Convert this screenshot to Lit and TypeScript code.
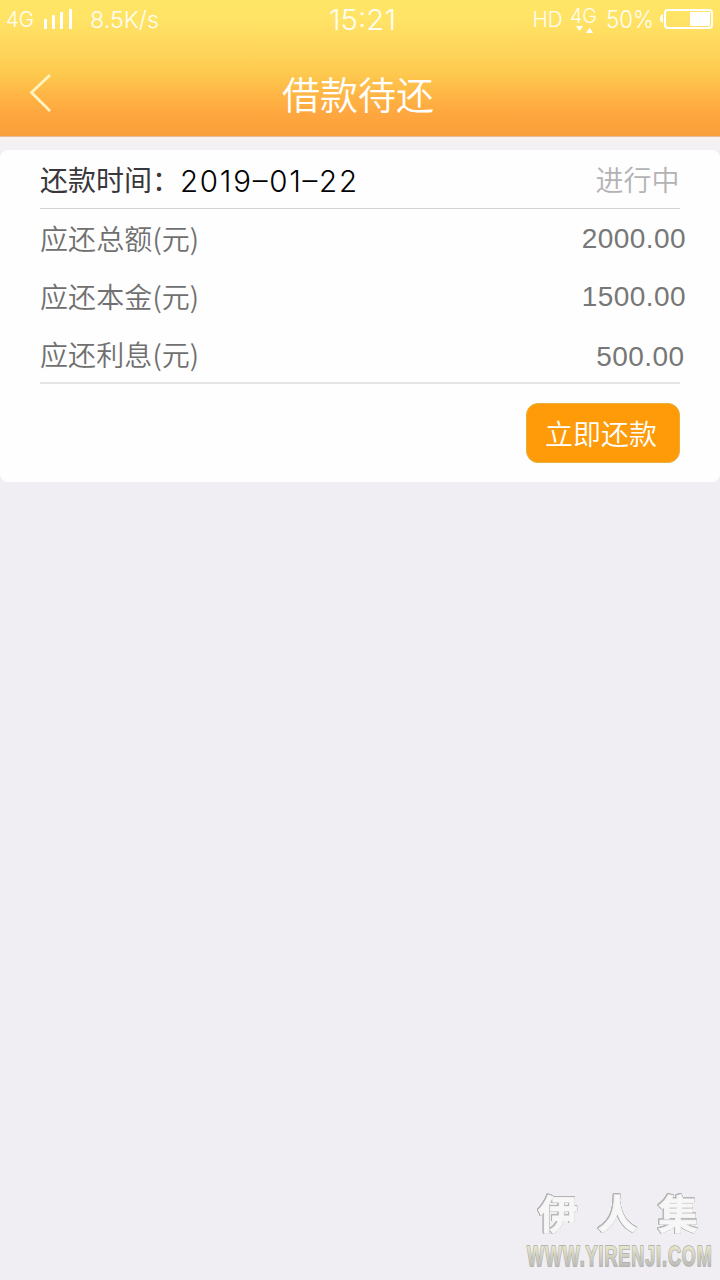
import { LitElement, html, css } from "lit";
import { customElement, property } from "lit/decorators.js";

@customElement("status-bar")
class StatusBar extends LitElement {
  static styles = css`
    :host { display: block; height: 40px; color: #fffef6; font-family: Inter, "Liberation Sans", sans-serif; font-weight: 360; }
    svg { display: block; width: 720px; height: 40px; }
  `;
  render() {
    return html`<svg viewBox="0 0 720 40" fill="currentColor">
      <text x="6" y="26.5" font-size="21.5" textLength="28" lengthAdjust="spacingAndGlyphs">4G</text>
      <g fill="#fff">
        <rect x="44" y="19" width="3" height="10" /><rect x="52" y="15" width="3" height="14" />
        <rect x="60" y="12" width="3" height="17" /><rect x="69" y="9" width="3" height="20" />
      </g>
      <text x="90" y="28" font-size="23" textLength="69" lengthAdjust="spacingAndGlyphs">8.5K/s</text>
      <text x="329" y="30" font-size="28" font-weight="300" textLength="67" lengthAdjust="spacingAndGlyphs">15:21</text>
      <text x="532.5" y="26.5" font-size="21" textLength="30" lengthAdjust="spacingAndGlyphs">HD</text>
      <text x="570" y="22.5" font-size="19.5" textLength="27" lengthAdjust="spacingAndGlyphs">4G</text>
      <path d="M576 26h7l-3.500 5zM586 33h7l-3.500-5.500z" fill="#fff" />
      <text x="606" y="28" font-size="23.500" textLength="48" lengthAdjust="spacingAndGlyphs">50%</text>
      <rect x="665" y="10" width="47" height="18" rx="3" fill="none" stroke="#fff" stroke-width="2" />
      <rect x="690" y="12" width="20" height="14" fill="#fff" />
      <path d="M663 14v9q-3-1-3-4.500t3-4.500z" fill="#fff" />
    </svg>`;
  }
}

@customElement("amount-row")
class AmountRow extends LitElement {
  @property() label = "";
  @property() value = "";
  static styles = css`
    :host { display: flex; justify-content: space-between; height: 58px; color: #707070; font: 350 28px/58px "Noto Sans CJK SC", sans-serif; }
    .label { letter-spacing: .1px; }
    .value { font-family: "Liberation Sans", sans-serif; font-weight: 400; color: #777; letter-spacing: .45px; margin-right: var(--shift, -6px); padding-top: var(--drop, 1px); }
  `;
  render() {
    return html`<span class="label">${this.label}</span><span class="value">${this.value}</span>`;
  }
}

@customElement("app-root")
class AppRoot extends LitElement {
  static styles = css`
    :host { display: flex; flex-direction: column; width: 720px; height: 1280px; overflow: hidden; position: relative; background: #f0eef2; font-family: "Noto Sans CJK SC", sans-serif; }
    .header { height: 136px; background: linear-gradient(#ffe566 0, #ffe366 20px, #ffd65c 48px, #fdc84d 75px, #ffb646 94px, #fea63f 114px, #fa9f39 136px); border-bottom: 1px solid #e6b9a0; }
    .nav { display: grid; grid-template-columns: 80px 1fr 80px; height: 96px; align-items: center; }
    .back { width: 22px; height: 40px; margin: 10px 0 0 29px; }
    .title { color: #fff; font-size: 38px; line-height: 56px; font-weight: 350; text-align: center; margin: 10px 4px 0 0; }
    .gap { height: 13px; background: linear-gradient(#faf3ee, #f3f1f3 60%); }
    .card { box-sizing: border-box; height: 332px; padding: 0 40px; background: #fefefe; border-radius: 8px; }
    .top { display: flex; height: 58px; line-height: 58px; font-size: 28px; border-bottom: 1px solid #d3d2d4; }
    .caption { color: #39373b; font-weight: 400; }
    .date { font-family: Inter, sans-serif; font-weight: 300; color: #000; font-size: 29.5px; margin-left: 1px; }
    .date svg { display: block; width: 180px; height: 58px; }
    .state { margin-left: auto; margin-right: .5px; color: #b3b2b4; font-weight: 350; }
    .rows { height: 173px; border-bottom: 2px solid #e6e3e7; }
    .last { --drop: 3px; --shift: -4.5px; height: 57px; }
    .actions { display: flex; justify-content: flex-end; padding-top: 19px; }
    .pay { box-sizing: border-box; width: 154px; height: 60px; border: 1px solid #e5b03b; border-radius: 12px; background: #ff9b08; color: #fff; font: 350 28px/58px "Noto Sans CJK SC", sans-serif; padding: 0 4px 0 0; text-align: center; }
    .mark { position: absolute; right: 0; bottom: 0; width: 210px; height: 110px; }
    .brand { filter: drop-shadow(.8px 0 0 #b4b3b5) drop-shadow(-.8px 0 0 #b4b3b5) drop-shadow(0 .8px 0 #b4b3b5) drop-shadow(0 -.8px 0 #b4b3b5); }
  `;
  render() {
    return html`
      <div class="header">
        <status-bar></status-bar>
        <div class="nav">
          <svg class="back" viewBox="0 0 22 40" fill="none" stroke="#fff4c0" stroke-width="2.800"><path d="M21 2L2.500 19.500L21 38" /></svg>
          <div class="title">借款待还</div>
        </div>
      </div>
      <div class="gap"></div>
      <div class="card">
        <div class="top">
          <span class="caption">还款时间：</span>
          <span class="date"><svg viewBox="0 0 180 58"><text x="-1" y="42" textLength="177">2019–01–22</text></svg></span>
          <span class="state">进行中</span>
        </div>
        <div class="rows">
          <amount-row label="应还总额(元)" value="2000.00"></amount-row>
          <amount-row label="应还本金(元)" value="1500.00"></amount-row>
          <amount-row class="last" label="应还利息(元)" value="500.00"></amount-row>
        </div>
        <div class="actions"><button class="pay">立即还款</button></div>
      </div>
      <svg class="mark" viewBox="0 0 210 110">
        <defs><linearGradient id="g" gradientUnits="userSpaceOnUse" x1="0" y1="-21" x2="0" y2="0"><stop offset="0" stop-color="#ecebc8" /><stop offset="1" stop-color="#bdbdb9" /></linearGradient></defs>
        <g class="brand" font-family="Noto Sans CJK SC" font-weight="700" font-size="40" fill="#f7f7f7" stroke="#f7f7f7" stroke-width=".8">
          <text x="28" y="58.500">伊</text><text x="87.500" y="58.500">人</text><text x="148" y="58.500">集</text>
        </g>
        <g transform="translate(17 95.500) scale(.62 1)">
          <text font-family="Liberation Sans" font-weight="700" font-size="29" letter-spacing="1.500" fill="url(#g)" stroke="#a8a8aa" stroke-width="1.500" paint-order="stroke">WWW.YIRENJI.COM</text>
        </g>
      </svg>
    `;
  }
}
